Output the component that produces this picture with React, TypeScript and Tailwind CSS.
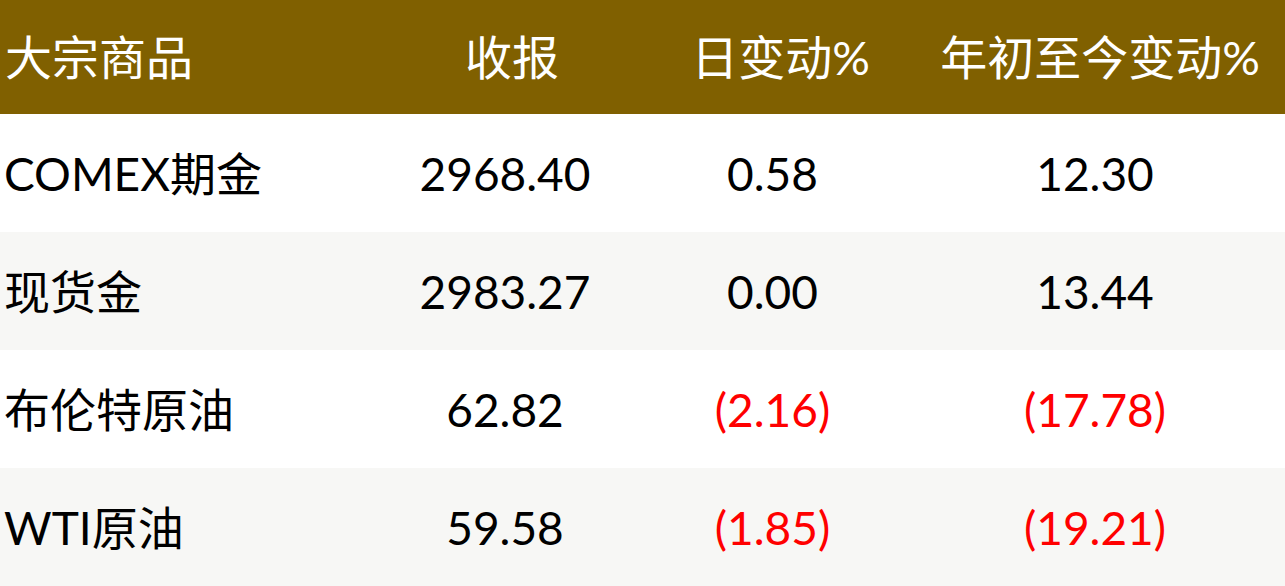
import React from "react";

const rows: { name: string; close: string; day: string; ytd: string; neg: boolean; alt: boolean }[] = [
  { name: "COMEX期金", close: "2968.40", day: "0.58", ytd: "12.30", neg: false, alt: false },
  { name: "现货金", close: "2983.27", day: "0.00", ytd: "13.44", neg: false, alt: true },
  { name: "布伦特原油", close: "62.82", day: "(2.16)", ytd: "(17.78)", neg: true, alt: false },
  { name: "WTI原油", close: "59.58", day: "(1.85)", ytd: "(19.21)", neg: true, alt: true },
];

export default function App() {
  return (
    <div
      className="w-[1285px] h-[586px] flex flex-col bg-white text-black"
      style={{ fontFamily: 'Lato, "Noto Sans CJK SC", sans-serif' }}
    >
      <div className="h-[114px] bg-[#806000] text-white text-[47px] grid grid-cols-[370px_270px_265px_380px] items-center">
        <div className="pl-[5px]">大宗商品</div>
        <div className="text-center pl-[14px]">收报</div>
        <div className="text-center pl-[16px]">日变动%</div>
        <div className="text-center pl-[10px]">年初至今变动%</div>
      </div>
      {rows.map((r) => (
        <div
          key={r.name}
          className={`h-[118px] text-[46px] grid grid-cols-[370px_270px_265px_380px] items-center ${r.alt ? "bg-[#f7f7f5]" : "bg-white"}`}
        >
          <div className="pl-[4px]">{r.name}</div>
          <div className="text-center">{r.close}</div>
          <div className={`text-center ${r.neg ? "text-[#ff0000]" : ""}`}>{r.day}</div>
          <div className={`text-center ${r.neg ? "text-[#ff0000]" : ""}`}>{r.ytd}</div>
        </div>
      ))}
    </div>
  );
}
